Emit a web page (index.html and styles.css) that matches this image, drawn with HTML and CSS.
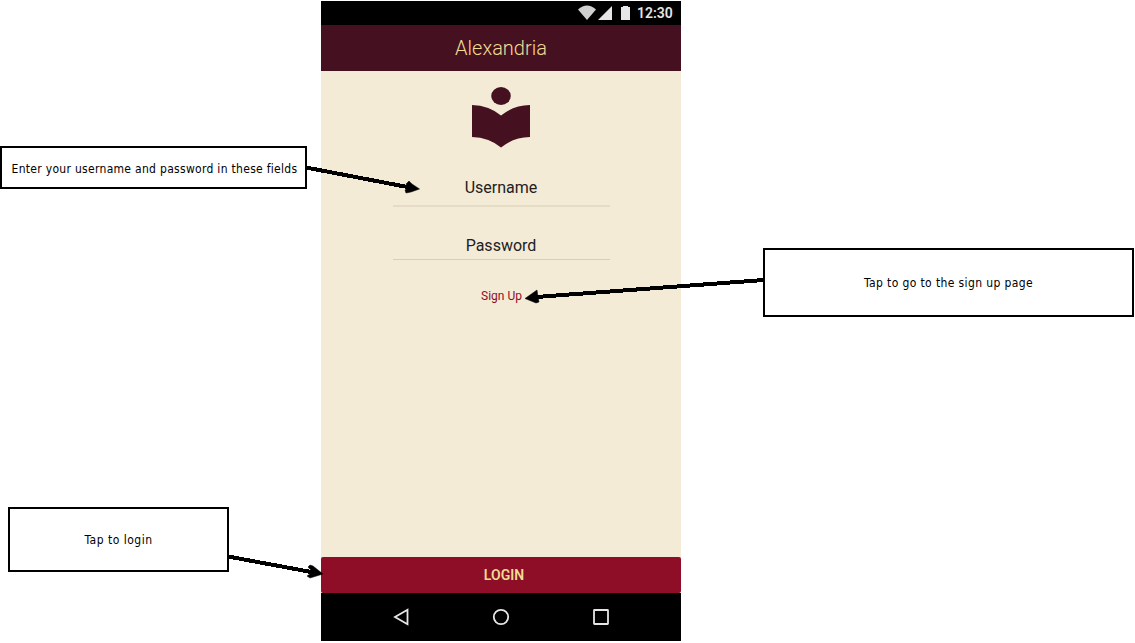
FILE: index.html
```html
<!DOCTYPE html>
<html lang="en">
<head>
<meta charset="utf-8">
<title>Alexandria</title>
<link rel="stylesheet" href="styles.css">
</head>
<body>
<main class="canvas">
  <section class="phone">
    <div class="status">
      <svg class="status-icons" width="54" height="16" viewBox="0 0 54 16">
        <path fill="#d0d0d0" d="M0 4.5Q9-3.500 18 4.500L9 15Z"/>
        <path fill="#e6e6e6" d="M20 15L34 1V15Z"/>
        <path fill="#e6e6e6" d="M43 2h2V1h5v1h2v13h-9Z"/>
      </svg>
      <span class="clock">12:30</span>
    </div>
    <header class="app-bar">Alexandria</header>
    <div class="content">
      <svg class="logo" width="58" height="61" viewBox="0 0 58 61">
        <ellipse cx="29" cy="9" rx="9.800" ry="9"/>
        <path d="M0 18Q17 18.500 29 28.500Q41 18.500 58 18V50Q41 50.500 29 60.500Q17 50.500 0 50Z"/>
      </svg>
      <div class="field username">Username</div>
      <div class="field password">Password</div>
      <a class="signup">Sign Up</a>
    </div>
    <div class="login">LOGIN</div>
    <nav class="nav">
      <svg width="20" height="20" viewBox="0 0 20 20"><path d="M16.500 2.800V17.200L4 10Z"/></svg>
      <svg width="20" height="20" viewBox="0 0 20 20"><circle cx="10" cy="10" r="7.200"/></svg>
      <svg width="20" height="20" viewBox="0 0 20 20"><rect x="3" y="3" width="14" height="14" rx=".5"/></svg>
    </nav>
  </section>
  <div class="note note-fields"><span>Enter your username and password in these fields</span></div>
  <div class="note note-signup"><span>Tap to go to the sign up page</span></div>
  <div class="note note-login"><span>Tap to login</span></div>
  <svg class="arrows" width="1135" height="643" viewBox="0 0 1135 643">
    <path class="shaft" d="M306 167.500L410 187.500M764 280L536 297M228 556.500L314 572.500"/>
    <path class="head" d="M409 181L412 184L419.500 189L411 192L406 193L405 190L408 188L406 184Z"/>
    <path class="head" d="M525 298.500L537 290L538 297L539 302L536 303Z"/>
    <path class="head" d="M310 565L313 566L323 574L310 578L307 576L313 572L308 567Z"/>
  </svg>
</main>
</body>
</html>
```
FILE: styles.css
```css
body {
  margin: 0;
  background: #fff;
  font-family: Roboto, sans-serif;
}
.canvas {
  position: relative;
  width: 1135px;
  height: 643px;
  overflow: hidden;
}
.phone {
  position: absolute;
  left: 321px;
  top: 1px;
  width: 360px;
  height: 640px;
  display: flex;
  flex-direction: column;
  background: #f4ebd7;
}
.status {
  height: 24px;
  display: flex;
  align-items: center;
  justify-content: flex-end;
  gap: 5px;
  padding-right: 8px;
  box-sizing: border-box;
  background: #000;
}
.clock {
  width: 36px;
  font-size: 14px;
  font-weight: 600;
  line-height: 24px;
  color: #e6e6e6;
}
.app-bar {
  height: 46px;
  line-height: 46px;
  text-align: center;
  font-size: 20px;
  font-weight: 300;
  color: #f0dc94;
  background: #451120;
}
.content {
  flex: 1;
  display: flex;
  flex-direction: column;
  align-items: center;
  padding-top: 16px;
}
.logo {
  fill: #451120;
}
.field {
  width: 217px;
  box-sizing: border-box;
  text-align: center;
  font-size: 16px;
  line-height: 20px;
  color: #212121;
}
.username {
  height: 29px;
  margin-top: 30px;
  border-bottom: 2px solid #e5dcc8;
}
.password {
  height: 24px;
  margin-top: 29px;
  border-bottom: 1px solid #d7cfbe;
}
.signup {
  margin-top: 28px;
  padding-left: 1px;
  font-size: 12px;
  line-height: 16px;
  color: #8e0e27;
}
.login {
  height: 36px;
  line-height: 36px;
  border-radius: 2px;
  text-align: center;
  font-size: 14px;
  font-weight: 600;
  padding-left: 6px;
  color: #f0dc94;
  background: #8e0e27;
}
.nav {
  height: 48px;
  display: flex;
  align-items: center;
  justify-content: center;
  gap: 80px;
  background: #000;
}
.nav svg {
  fill: none;
  stroke: #e6e6e6;
  stroke-width: 1.8;
}
.note {
  position: absolute;
  box-sizing: border-box;
  border: 2px solid #000;
  background: #fff;
  display: flex;
  align-items: center;
  justify-content: center;
  font-family: "DejaVu Sans Condensed", "DejaVu Sans", sans-serif;
  font-stretch: condensed;
  font-size: 12px;
  white-space: nowrap;
  color: #000;
}
.note-fields {
  left: 0;
  top: 146px;
  width: 307px;
  height: 43px;
  padding: 2px 0 0 2px;
  letter-spacing: .3px;
}
.note-signup {
  left: 763px;
  top: 248px;
  width: 371px;
  height: 69px;
  letter-spacing: .38px;
}
.note-login {
  left: 8px;
  top: 507px;
  width: 221px;
  height: 65px;
  letter-spacing: .5px;
}
.arrows {
  position: absolute;
  left: 0;
  top: 0;
}
.shaft {
  stroke: #000;
  stroke-width: 4;
  shape-rendering: crispEdges;
}
.head {
  fill: #000;
  stroke: #000;
  stroke-width: .5;
}
```
